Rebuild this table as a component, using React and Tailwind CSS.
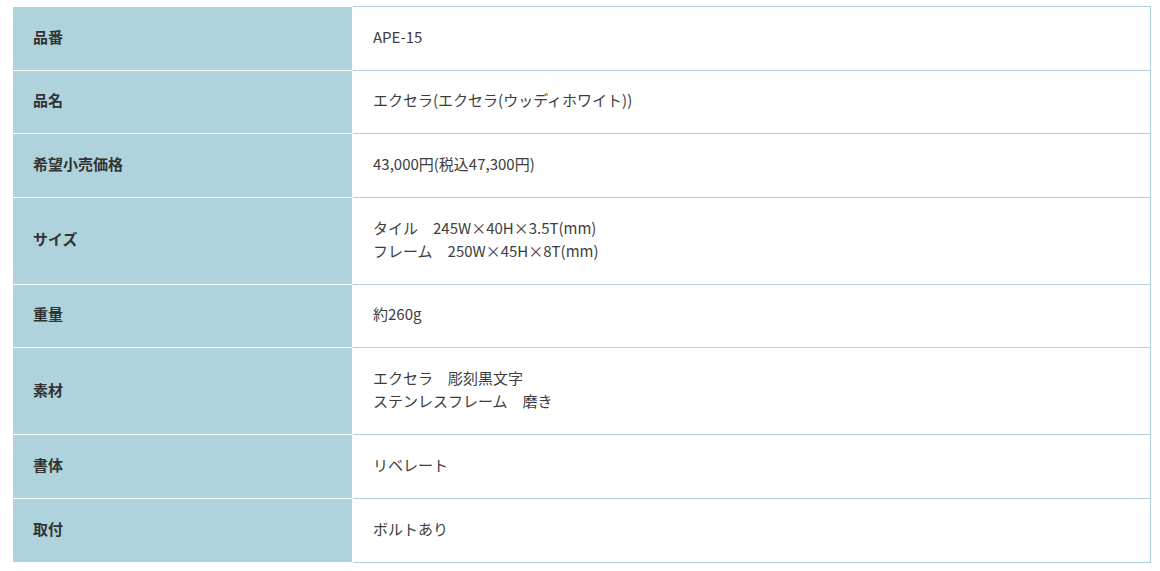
const rows = [
  { label: "品番", value: ["APE-15"] },
  { label: "品名", value: ["エクセラ(エクセラ(ウッディホワイト))"] },
  { label: "希望小売価格", value: ["43,000円(税込47,300円)"] },
  { label: "サイズ", value: ["タイル　245W×40H×3.5T(mm)", "フレーム　250W×45H×8T(mm)"] },
  { label: "重量", value: ["約260g"] },
  { label: "素材", value: ["エクセラ　彫刻黒文字", "ステンレスフレーム　磨き"] },
  { label: "書体", value: ["リベレート"] },
  { label: "取付", value: ["ボルトあり"] },
];

export default function App() {
  return (
    <div
      className="w-[1160px] h-[571px] bg-white pt-[6px] pl-[12px]"
      style={{ fontFamily: '"Noto Sans CJK JP", "Noto Sans", sans-serif' }}
    >
      <table className="w-[1139px] border-collapse text-[15px] leading-[23.25px] text-[#333]">
        <tbody>
          {rows.map((row) => (
            <tr key={row.label}>
              <th className="w-[340px] bg-[#afd3dc] border border-white text-left align-middle font-bold px-[20px] pt-[17.7px] pb-[21.7px]">
                {row.label}
              </th>
              <td className="border border-[#afd3dc] align-middle text-[#3d3d3d] px-[20px] pt-[17.7px] pb-[21.7px]">
                {row.value.map((line) => (
                  <div key={line}>{line}</div>
                ))}
              </td>
            </tr>
          ))}
        </tbody>
      </table>
    </div>
  );
}
